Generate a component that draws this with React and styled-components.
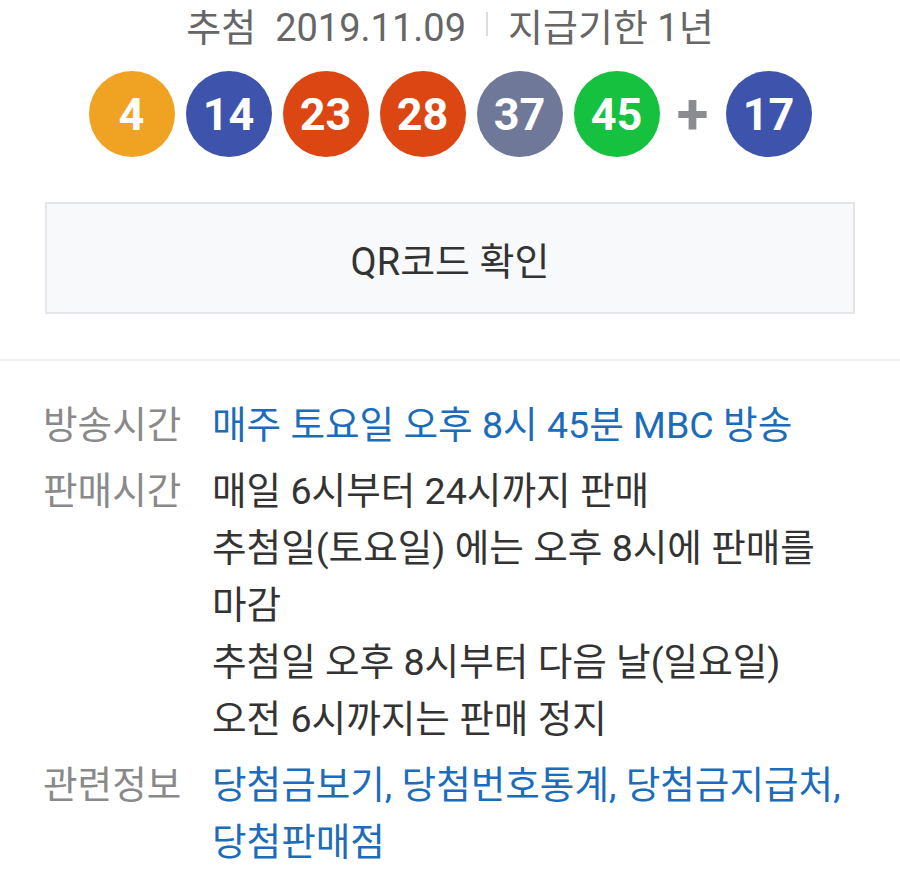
import React from "react";
import styled, { createGlobalStyle } from "styled-components";

const GlobalStyle = createGlobalStyle`
  html, body {
    margin: 0;
    padding: 0;
    background: #ffffff;
  }
  body {
    font-family: Roboto, "Noto Sans CJK KR", "Noto Sans", sans-serif;
  }
`;

const Page = styled.div`
  width: 900px;
  height: 882px;
  overflow: hidden;
  background: #fff;
`;

const DrawInfo = styled.div`
  display: flex;
  justify-content: center;
  align-items: center;
  gap: 20px;
  height: 48px;
  font-size: 38px;
  color: #666;
`;

const Sep = styled.span`
  width: 2px;
  height: 24px;
  background: #ddd;
`;

const Balls = styled.div`
  display: flex;
  justify-content: center;
  align-items: center;
  gap: 11px;
  margin-top: 23px;
`;

const Ball = styled.span`
  width: 86px;
  height: 86px;
  border-radius: 50%;
  background: ${(p) => p.$color};
  color: #fff;
  font-family: Roboto, sans-serif;
  font-weight: 700;
  font-size: 45px;
  display: flex;
  align-items: center;
  justify-content: center;
`;

const Plus = styled.span`
  width: 40px;
  display: flex;
  justify-content: center;
  color: #8a8c90;
  font-family: Roboto, sans-serif;
  font-weight: 700;
  font-size: 58px;
  line-height: 1;
  margin: 0 2px;
`;

const QrButton = styled.button`
  display: block;
  margin: 45px 45px 0;
  width: 810px;
  height: 112px;
  background: #f8f9fb;
  border: 2px solid #e3e5e8;
  font-family: Roboto, "Noto Sans CJK KR", sans-serif;
  font-size: 38px;
  color: #333;
`;

const Divider = styled.hr`
  margin: 45px 0 0;
  border: 0;
  height: 2px;
  background: #eff0f2;
`;

const InfoList = styled.dl`
  margin: 36px 0 0;
  padding: 0 43px;
  font-size: 37.6px;
  line-height: 57px;
`;

const Row = styled.div`
  display: flex;
  margin-bottom: 9px;
`;

const Label = styled.dt`
  width: 169px;
  flex-shrink: 0;
  color: #898989;
`;

const Value = styled.dd`
  margin: 0;
  color: ${(p) => (p.$link ? "#1b6cbb" : "#333")};
`;

const ballColor = (n) => {
  if (n <= 10) return "#f0a223";
  if (n <= 20) return "#3e54ac";
  if (n <= 30) return "#db4612";
  if (n <= 40) return "#6f7898";
  return "#15c13f";
};

export default function App() {
  const nums = [4, 14, 23, 28, 37, 45];
  const bonus = 17;
  return (
    <Page>
      <GlobalStyle />
      <DrawInfo>
        <span>추첨&nbsp; 2019.11.09</span>
        <Sep />
        <span>지급기한 1년</span>
      </DrawInfo>
      <Balls>
        {nums.map((n) => (
          <Ball key={n} $color={ballColor(n)}>
            {n}
          </Ball>
        ))}
        <Plus>+</Plus>
        <Ball $color={ballColor(bonus)}>{bonus}</Ball>
      </Balls>
      <QrButton>QR코드 확인</QrButton>
      <Divider />
      <InfoList>
        <Row>
          <Label>방송시간</Label>
          <Value $link>매주 토요일 오후 8시 45분 MBC 방송</Value>
        </Row>
        <Row>
          <Label>판매시간</Label>
          <Value>
            매일 6시부터 24시까지 판매
            <br />
            추첨일(토요일) 에는 오후 8시에 판매를
            <br />
            마감
            <br />
            추첨일 오후 8시부터 다음 날(일요일)
            <br />
            오전 6시까지는 판매 정지
          </Value>
        </Row>
        <Row>
          <Label>관련정보</Label>
          <Value $link>
            당첨금보기, 당첨번호통계, 당첨금지급처,
            <br />
            당첨판매점
          </Value>
        </Row>
      </InfoList>
    </Page>
  );
}
